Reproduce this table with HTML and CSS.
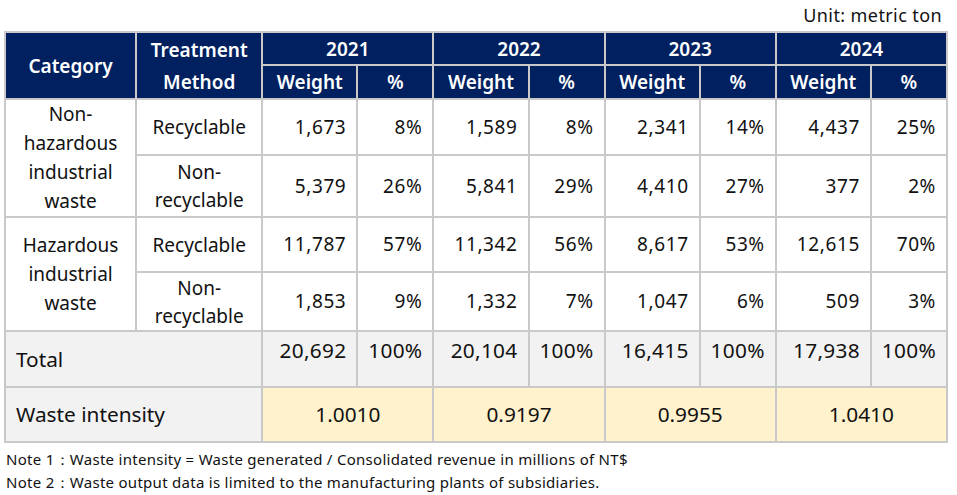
FILE: index.html
```
<!DOCTYPE html>
<html>
<head>
<meta charset="utf-8">
<link rel="stylesheet" href="styles.css">
</head>
<body>
<div class="page">
  <div class="unit">Unit: metric ton</div>
  <table class="waste">
    <colgroup>
      <col class="c-cat"><col class="c-method">
      <col class="c-w"><col class="c-p">
      <col class="c-w"><col class="c-p">
      <col class="c-w"><col class="c-p">
      <col class="c-w"><col class="c-p">
    </colgroup>
    <thead>
      <tr class="h1">
        <th rowspan="2">Category</th>
        <th rowspan="2" class="two">Treatment<br>Method</th>
        <th colspan="2">2021</th>
        <th colspan="2">2022</th>
        <th colspan="2">2023</th>
        <th colspan="2">2024</th>
      </tr>
      <tr class="h2">
        <th>Weight</th><th>%</th>
        <th>Weight</th><th>%</th>
        <th>Weight</th><th>%</th>
        <th>Weight</th><th>%</th>
      </tr>
    </thead>
    <tbody>
      <tr class="r1">
        <td rowspan="2" class="cat">Non-<br>hazardous<br>industrial<br>waste</td>
        <td class="method">Recyclable</td>
        <td class="num">1,673</td><td class="num">8%</td>
        <td class="num">1,589</td><td class="num">8%</td>
        <td class="num">2,341</td><td class="num">14%</td>
        <td class="num">4,437</td><td class="num">25%</td>
      </tr>
      <tr class="r2">
        <td class="method">Non-<br>recyclable</td>
        <td class="num">5,379</td><td class="num">26%</td>
        <td class="num">5,841</td><td class="num">29%</td>
        <td class="num">4,410</td><td class="num">27%</td>
        <td class="num">377</td><td class="num">2%</td>
      </tr>
      <tr class="r3">
        <td rowspan="2" class="cat">Hazardous<br>industrial<br>waste</td>
        <td class="method">Recyclable</td>
        <td class="num">11,787</td><td class="num">57%</td>
        <td class="num">11,342</td><td class="num">56%</td>
        <td class="num">8,617</td><td class="num">53%</td>
        <td class="num">12,615</td><td class="num">70%</td>
      </tr>
      <tr class="r4">
        <td class="method">Non-<br>recyclable</td>
        <td class="num">1,853</td><td class="num">9%</td>
        <td class="num">1,332</td><td class="num">7%</td>
        <td class="num">1,047</td><td class="num">6%</td>
        <td class="num">509</td><td class="num">3%</td>
      </tr>
      <tr class="total">
        <td colspan="2" class="label">Total</td>
        <td class="num">20,692</td><td class="num">100%</td>
        <td class="num">20,104</td><td class="num">100%</td>
        <td class="num">16,415</td><td class="num">100%</td>
        <td class="num">17,938</td><td class="num">100%</td>
      </tr>
      <tr class="intensity">
        <td colspan="2" class="label">Waste intensity</td>
        <td colspan="2" class="val">1.0010</td>
        <td colspan="2" class="val">0.9197</td>
        <td colspan="2" class="val">0.9955</td>
        <td colspan="2" class="val">1.0410</td>
      </tr>
    </tbody>
  </table>
  <div class="notes">
    <p>Note 1：Waste intensity = Waste generated / Consolidated revenue in millions of NT$</p>
    <p>Note 2：Waste output data is limited to the manufacturing plants of subsidiaries.</p>
  </div>
</div>
</body>
</html>
```

FILE: styles.css
```
html, body {
  margin: 0;
  padding: 0;
  background: #ffffff;
}
body {
  font-family: "Noto Sans", "Open Sans", "Liberation Sans", sans-serif;
  color: #111;
}
.page {
  width: 944px;
  padding-left: 4px;
}
.unit {
  text-align: right;
  font-size: 18px;
  letter-spacing: 0.4px;
  line-height: 30px;
  height: 31px;
  padding-right: 6px;
}
.waste {
  border-collapse: collapse;
  table-layout: fixed;
  width: 944px;
  font-size: 19px;
}
.c-cat { width: 131px; }
.c-method { width: 126px; }
.c-w { width: 95px; }
.c-p { width: 76px; }
.waste th, .waste td {
  border: 2px solid #c9c9c9;
  padding: 0;
}
.waste th {
  background: #002060;
  color: #fff;
  font-weight: 600;
  text-align: center;
  line-height: 30px;
}
.h1 th { height: 31px; }
.h2 th { height: 32px; }
.waste th.two { line-height: 32px; }
.waste td {
  line-height: 29px;
  text-align: center;
}
.waste td.method { line-height: 28px; }
.r1 td { height: 54px; }
.r2 td { height: 59px; }
.r3 td { height: 53px; }
.r4 td { height: 57px; }
.waste td.num {
  text-align: right;
  padding-right: 10px;
  letter-spacing: 0.6px;
}
.total td {
  background: #f2f2f2;
  height: 54px;
  font-size: 20.8px;
}
.total td.num {
  vertical-align: top;
  padding-top: 4px;
  height: 50px;
  letter-spacing: 0.3px;
}
.waste td.label {
  text-align: left;
  padding-left: 10px;
}
.intensity td {
  height: 53px;
  background: #f2f2f2;
  font-size: 20.8px;
}
.intensity td.val {
  background: #fff2cc;
  text-align: center;
}
.notes {
  padding-top: 5px;
  padding-left: 2px;
  font-size: 15px;
  letter-spacing: 0.28px;
  line-height: 23px;
}
.notes p {
  margin: 0;
}
```
